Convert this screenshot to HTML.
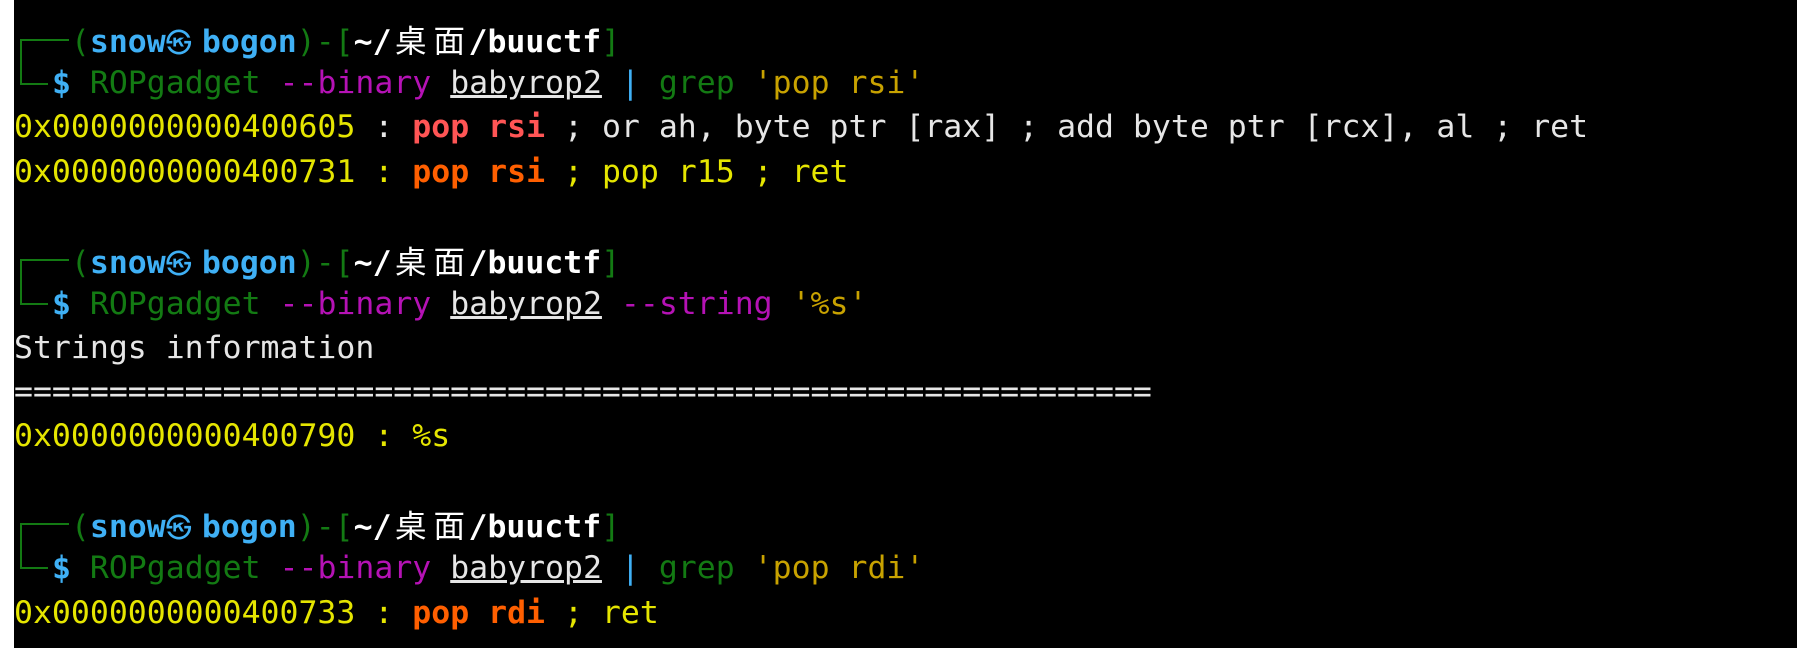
<!DOCTYPE html>
<html><head><meta charset="utf-8"><style>
html,body{margin:0;padding:0;background:#000;width:1797px;height:648px;overflow:hidden;}
.w{position:absolute;left:0;top:0;width:14px;height:648px;background:#fff;}
.l{position:absolute;left:14px;white-space:pre;font-family:"DejaVu Sans Mono","Liberation Mono","Noto Sans CJK SC",monospace;font-size:31.5px;line-height:44px;height:44px;color:#e6e6e6;}
.g{color:#137a13}.b{color:#3fb0f5;font-weight:bold}.wb{color:#fff;font-weight:bold}
.m{color:#b512b5}.y{color:#c8a200}.Y{color:#e5e500}.r{color:#ff5555;font-weight:bold}.o{color:#ff5f00;font-weight:bold}
.u{text-decoration:underline}.cj{font-family:"Noto Sans CJK SC",sans-serif;font-weight:normal;display:inline-block;width:2.2ch;text-align:center}
.k{display:inline-block;width:1.1ch;font-size:26px;font-weight:normal;text-align:center;overflow:visible}
.v{position:absolute;background:#137a13}
</style></head><body>
<div class="w"></div>

<div class="v" style="left:20px;top:40px;width:2px;height:45px"></div>
<div class="v" style="left:20px;top:39px;width:49px;height:2px"></div>
<div class="v" style="left:20px;top:83px;width:28px;height:2px"></div>
<div class="v" style="left:20px;top:260px;width:2px;height:45px"></div>
<div class="v" style="left:20px;top:259px;width:49px;height:2px"></div>
<div class="v" style="left:20px;top:303px;width:28px;height:2px"></div>
<div class="v" style="left:20px;top:524px;width:2px;height:45px"></div>
<div class="v" style="left:20px;top:523px;width:49px;height:2px"></div>
<div class="v" style="left:20px;top:567px;width:28px;height:2px"></div>

<div class="l" style="top:17px">   <span class="g">(</span><span class="b">snow<span class="k">㉿</span> bogon</span><span class="g">)-[</span><span class="wb">~/<span class="cj">桌</span><span class="cj">面</span>/buuctf</span><span class="g">]</span></div>
<div class="l" style="top:61px">  <span class="b">$</span> <span class="g">ROPgadget</span> <span class="m">--binary</span> <span class="u">babyrop2</span> <span class="b" style="font-weight:normal">|</span> <span class="g">grep</span> <span class="y">'pop rsi'</span></div>
<div class="l" style="top:105px"><span class="Y">0x0000000000400605</span> : <span class="r">pop rsi</span> ; or ah, byte ptr [rax] ; add byte ptr [rcx], al ; ret</div>
<div class="l" style="top:150px"><span class="Y">0x0000000000400731</span><span class="Y"> : </span><span class="o">pop rsi</span><span class="Y"> ; pop r15 ; ret</span></div>

<div class="l" style="top:238px">   <span class="g">(</span><span class="b">snow<span class="k">㉿</span> bogon</span><span class="g">)-[</span><span class="wb">~/<span class="cj">桌</span><span class="cj">面</span>/buuctf</span><span class="g">]</span></div>
<div class="l" style="top:282px">  <span class="b">$</span> <span class="g">ROPgadget</span> <span class="m">--binary</span> <span class="u">babyrop2</span> <span class="m">--string</span> <span class="y">'%s'</span></div>
<div class="l" style="top:326px">Strings information</div>
<div class="l" style="top:370px">============================================================</div>
<div class="l" style="top:414px"><span class="Y">0x0000000000400790 : %s</span></div>

<div class="l" style="top:502px">   <span class="g">(</span><span class="b">snow<span class="k">㉿</span> bogon</span><span class="g">)-[</span><span class="wb">~/<span class="cj">桌</span><span class="cj">面</span>/buuctf</span><span class="g">]</span></div>
<div class="l" style="top:546px">  <span class="b">$</span> <span class="g">ROPgadget</span> <span class="m">--binary</span> <span class="u">babyrop2</span> <span class="b" style="font-weight:normal">|</span> <span class="g">grep</span> <span class="y">'pop rdi'</span></div>
<div class="l" style="top:591px"><span class="Y">0x0000000000400733 : </span><span class="o">pop rdi</span><span class="Y"> ; ret</span></div>
</body></html>
